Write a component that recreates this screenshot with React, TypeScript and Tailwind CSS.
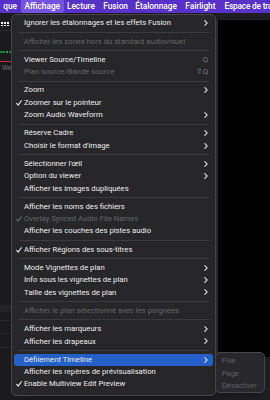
import React from 'react'

type Entry =
  | 'sep'
  | {
      label: string
      sub?: boolean
      checked?: boolean
      disabled?: boolean
      shortcut?: string
      active?: boolean
    }

const entries: Entry[] = [
  { label: 'Ignorer les étalonnages et les effets Fusion', sub: true },
  'sep',
  { label: 'Afficher les zones hors du standard audiovisuel', disabled: true },
  'sep',
  { label: 'Viewer Source/Timeline', shortcut: 'Q' },
  { label: 'Plan source/Bande source', disabled: true, shortcut: '⇧Q' },
  'sep',
  { label: 'Zoom', sub: true },
  { label: 'Zoomer sur le pointeur', checked: true },
  { label: 'Zoom Audio Waveform', sub: true },
  'sep',
  { label: 'Réserve Cadre', sub: true },
  { label: "Choisir le format d'image", sub: true },
  'sep',
  { label: "Sélectionner l'œil", sub: true },
  { label: 'Option du viewer', sub: true },
  { label: 'Afficher les images dupliquées' },
  'sep',
  { label: 'Afficher les noms des fichiers' },
  { label: 'Overlay Synced Audio File Names', checked: true, disabled: true },
  { label: 'Afficher les couches des pistes audio' },
  'sep',
  { label: 'Afficher Régions des sous-titres', checked: true },
  'sep',
  { label: 'Mode Vignettes de plan', sub: true },
  { label: 'Info sous les vignettes de plan', sub: true },
  { label: 'Taille des vignettes de plan', sub: true },
  'sep',
  { label: 'Afficher le plan sélectionné avec les poignées', disabled: true },
  'sep',
  { label: 'Afficher les marqueurs', sub: true },
  { label: 'Afficher les drapeaux', sub: true },
  'sep',
  { label: 'Défilement Timeline', sub: true, active: true },
  { label: 'Afficher les repères de prévisualisation' },
  { label: 'Enable Multiview Edit Preview', checked: true },
]

const Check = ({ dim }: { dim?: boolean }) => (
  <svg width="6" height="6" viewBox="0 0 6 6" fill="none">
    <path
      d="M0.7 3.3 L2.2 5.1 L5.3 0.7"
      stroke={dim ? '#68686b' : '#ececec'}
      strokeWidth="1.1"
      strokeLinecap="round"
      strokeLinejoin="round"
    />
  </svg>
)

const Chevron = () => (
  <svg width="4" height="6" viewBox="0 0 4 6" fill="none">
    <path d="M0.8 0.7 L3.1 3 L0.8 5.3" stroke="#d8d8da" strokeWidth="1.1" strokeLinecap="round" strokeLinejoin="round" />
  </svg>
)

function MenuBar() {
  return (
    <div className="flex h-[13px] items-center whitespace-nowrap bg-[#5732c8] text-[8.3px] font-medium text-white">
      <div className="flex w-[21px] shrink-0 justify-end pr-[4px]">que</div>
      <div className="flex h-full w-[42.6px] shrink-0 items-center justify-center rounded-b-[2px] bg-[#7453de]">Affichage</div>
      <div className="flex w-[34.6px] shrink-0 justify-center">Lecture</div>
      <div className="flex w-[34.8px] shrink-0 justify-center">Fusion</div>
      <div className="flex w-[46.2px] shrink-0 justify-center">Étalonnage</div>
      <div className="flex w-[42.4px] shrink-0 justify-center">Fairlight</div>
      <div className="min-w-0 pl-[3px] tracking-[-0.2px]">Espace de tra</div>
    </div>
  )
}

function Backdrop() {
  return (
    <div className="flex h-[387px]">
      <div className="flex w-[216px] flex-col bg-[#1c1c1e]">
        <div className="h-[9px]" />
        <div className="grid w-[9px] grid-cols-3 gap-[1px] pl-[1px]">
          <span className="h-[1.6px] w-[1.6px] bg-white" />
          <span className="h-[1.6px] w-[1.6px] bg-white" />
          <span className="h-[1.6px] w-[1.6px] bg-white" />
          <span className="h-[1.6px] w-[1.6px] bg-white" />
          <span className="h-[1.6px] w-[1.6px] bg-white" />
          <span className="h-[1.6px] w-[1.6px] bg-white" />
        </div>
        <div className="mt-[4px] h-[1px] bg-[#2c2c2f]" />
        <div className="h-[19px]" />
        <svg width="12" height="4" viewBox="0 0 12 4">
          <path d="M0 2 H12" stroke="#2f9a4a" strokeWidth="1.4" strokeDasharray="2 1" />
          <path d="M3 1 V3 M7 0.8 V3.2" stroke="#3fb35a" strokeWidth="1" />
        </svg>
        <div className="h-[7px]" />
        <div className="h-[1px] w-[12px] bg-[#c0323a]" />
        <div className="pl-[2px] pt-[3px] text-[6.5px] leading-none text-[#77777a] [font-family:'Liberation_Sans',sans-serif]">We</div>
        <div className="h-[233px]" />
        <div className="h-[7px] bg-[#242427]" />
        <div className="mt-[8px] h-[1px] bg-[#2a2a2d]" />
        <div className="mt-[12px] h-[1px] bg-[#2a2a2d]" />
        <div className="mt-[13px] h-[1px] bg-[#2a2a2d]" />
      </div>
      <div className="flex flex-1 flex-col">
        <div className="h-[7px] bg-[#1f1f22]" />
        <div className="flex flex-1">
          <div className="w-[2px] bg-[#2b2b2e]" />
          <div className="flex-1 bg-black" />
        </div>
        <div className="h-[43px] bg-[#1f1f22]">
          <div className="mt-[32px] h-[1px] bg-[#2c2c2f]" />
        </div>
      </div>
    </div>
  )
}

function Menu() {
  return (
    <div className="absolute left-[11px] top-[14px] w-[205px] rounded-[5px] border border-[#46464a] bg-[#27272a] px-[2px] pb-[5px] pt-[2px] shadow-lg">
      {entries.map((e, i) => {
        if (e === 'sep') {
          return (
            <div key={i} className="flex h-[6px] items-center pl-[5px] pr-[4px]">
              <div className="h-[1px] flex-1 bg-[#3b3b3e]" />
            </div>
          )
        }
        const color = e.disabled ? 'text-[#646467]' : 'text-[#ececec]'
        return (
          <div
            key={i}
            className={`flex h-[12.3px] items-center whitespace-nowrap rounded-[3px] pr-[5px] ${e.active ? 'bg-[#2461c6]' : ''}`}
          >
            <div className="flex w-[10px] justify-center">{e.checked && <Check dim={e.disabled} />}</div>
            <div className={`flex-1 ${color}`}>{e.label}</div>
            {e.shortcut && <div className="text-[#7c7c80]">{e.shortcut}</div>}
            {e.sub && <Chevron />}
          </div>
        )
      })}
    </div>
  )
}

function SubMenu() {
  return (
    <div className="absolute left-[215px] top-[352px] w-[50px] rounded-[5px] border border-[#46464a] bg-[#29292c] pl-[6px] pt-[2px] text-[7.4px] text-[#5f5f63] shadow-lg">
      <div className="flex h-[12.3px] items-center">Fixe</div>
      <div className="flex h-[12.3px] items-center">Page</div>
      <div className="flex h-[12.3px] items-center">Désactiver</div>
    </div>
  )
}

export default function App() {
  return (
    <div className="relative h-[400px] w-[270px] overflow-hidden bg-[#1c1c1e] text-[7.7px] leading-none [font-family:Roboto,'Liberation_Sans',sans-serif]">
      <MenuBar />
      <Backdrop />
      <Menu />
      <SubMenu />
    </div>
  )
}
